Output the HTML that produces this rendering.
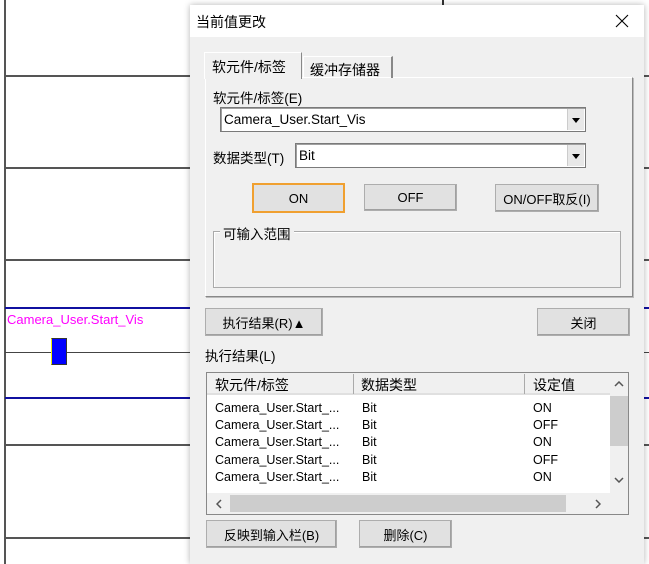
<!DOCTYPE html><html><head><meta charset="utf-8"><style>
*{box-sizing:border-box;margin:0;padding:0}
body{width:649px;height:564px;background:#fff;position:relative;overflow:hidden;font-family:"Liberation Sans","Noto Sans CJK SC",sans-serif;font-size:13px;color:#000}
.a{position:absolute}
.h{position:absolute;left:4px;width:645px;height:2px;background:#555}
.btn{position:absolute;background:#e1e1e1;border:1px solid #adadad;box-shadow:inset -1px -1px 0 #a0a0a0;display:flex;align-items:center;justify-content:center;font-size:13px}
.combo{position:absolute;background:#fff;border:1px solid #7a7a7a;box-shadow:inset 1px 1px 0 #a0a0a0;padding-left:3px;line-height:24px;font-size:13.5px}
.dd{position:absolute;right:1px;top:1px;bottom:1px;width:17px;background:#e8e8e8;border-left:1px solid #ccc}
.dd:after{content:"";position:absolute;left:4px;top:9px;border-left:4px solid transparent;border-right:4px solid transparent;border-top:5px solid #000}
.row{position:absolute;left:8px;font-size:12.5px;height:17px;line-height:17px}
</style></head><body>
<div class="a" style="left:4px;top:0;width:2px;height:564px;background:#555"></div>
<div class="a" style="left:442px;top:0;width:2px;height:10px;background:#333"></div>
<div class="h" style="top:75px"></div>
<div class="h" style="top:167px"></div>
<div class="h" style="top:259px"></div>
<div class="a" style="left:5px;top:307px;width:644px;height:2px;background:#1010a0"></div>
<div class="a" style="left:5px;top:397px;width:644px;height:2px;background:#1010a0"></div>
<div class="a" style="left:5px;top:352px;width:644px;height:1px;background:#444"></div>
<div class="h" style="top:444px"></div>
<div class="h" style="top:537px"></div>
<div class="a" style="left:7px;top:312px;color:#f0f;font-size:13px">Camera_User.Start_Vis</div>
<div class="a" style="left:51px;top:338px;width:16px;height:27px;background:#00f;border:1px solid #333;border-left-color:#ee0"></div>

<div class="a" style="left:190px;top:5px;width:454px;height:559px;background:#f0f0f0;box-shadow:0 0 6px rgba(0,0,0,.3)">
<div class="a" style="left:0;top:0;width:454px;height:32px;background:#fff"></div>
<div class="a" style="left:6px;top:7px;font-size:14px">当前值更改</div>
<svg class="a" style="left:425px;top:9px" width="14" height="14"><path d="M1 1L13 13M13 1L1 13" stroke="#000" stroke-width="1.1"/></svg>
<div class="a" style="left:15px;top:72px;width:428px;height:220px;border:1px solid #fff;border-right-color:#888;border-bottom-color:#888;box-shadow:1px 1px 0 #bbb"></div>
<div class="a" style="left:14px;top:47px;width:98px;height:27px;background:#f0f0f0;border:1px solid #fff;border-bottom:none;border-right-color:#888;padding:4px 0 0 7px;font-size:14px">软元件/标签</div>
<div class="a" style="left:113px;top:51px;width:90px;height:22px;border:1px solid #fff;border-bottom:none;border-right:2px solid #888;padding:3px 0 0 6px;font-size:14px">缓冲存储器</div>
<div class="a" style="left:23px;top:82px;font-size:13.5px">软元件/标签(E)</div>
<div class="combo" style="left:30px;top:102px;width:366px;height:25px">Camera_User.Start_Vis<div class="dd"></div></div>
<div class="a" style="left:23px;top:142px;font-size:13.5px">数据类型(T)</div>
<div class="combo" style="left:105px;top:138px;width:291px;height:25px">Bit<div class="dd"></div></div>
<div class="btn" style="left:62px;top:178px;width:93px;height:30px;border:2px solid #f0a030;box-shadow:none">ON</div>
<div class="btn" style="left:174px;top:179px;width:93px;height:27px">OFF</div>
<div class="btn" style="left:305px;top:179px;width:104px;height:28px">ON/OFF取反(I)</div>
<div class="a" style="left:23px;top:226px;width:408px;height:57px;border:1px solid #aaa;box-shadow:1px 1px 0 #fff inset"></div>
<div class="a" style="left:30px;top:218px;background:#f0f0f0;padding:0 3px;font-size:13.5px">可输入范围</div>
<div class="btn" style="left:15px;top:303px;width:118px;height:28px">执行结果(R)▲</div>
<div class="btn" style="left:347px;top:303px;width:93px;height:28px">关闭</div>
<div class="a" style="left:15px;top:340px;font-size:13.5px">执行结果(L)</div>
<div class="a" style="left:16px;top:367px;width:423px;height:143px;border:1px solid #888;background:#fff;overflow:hidden">
 <div class="a" style="left:0;top:0;width:403px;height:22px;background:#f0f0f0;border-bottom:2px solid #e0e0e0"></div>
 <div class="a" style="left:146px;top:1px;width:1px;height:20px;background:#aaa"></div>
 <div class="a" style="left:317px;top:1px;width:1px;height:20px;background:#aaa"></div>
 <div class="a" style="left:8px;top:2px;font-size:14px">软元件/标签</div>
 <div class="a" style="left:154px;top:2px;font-size:14px">数据类型</div>
 <div class="a" style="left:326px;top:2px;font-size:14px">设定值</div>
 <div class="row" style="top:27px">Camera_User.Start_...</div><div class="row" style="top:27px;left:155px">Bit</div><div class="row" style="top:27px;left:326px">ON</div>
 <div class="row" style="top:44px">Camera_User.Start_...</div><div class="row" style="top:44px;left:155px">Bit</div><div class="row" style="top:44px;left:326px">OFF</div>
 <div class="row" style="top:61px">Camera_User.Start_...</div><div class="row" style="top:61px;left:155px">Bit</div><div class="row" style="top:61px;left:326px">ON</div>
 <div class="row" style="top:79px">Camera_User.Start_...</div><div class="row" style="top:79px;left:155px">Bit</div><div class="row" style="top:79px;left:326px">OFF</div>
 <div class="row" style="top:96px">Camera_User.Start_...</div><div class="row" style="top:96px;left:155px">Bit</div><div class="row" style="top:96px;left:326px">ON</div>
 <div class="a" style="left:403px;top:0;width:18px;height:120px;background:#f0f0f0"></div>
 <div class="a" style="left:403px;top:23px;width:18px;height:50px;background:#cdcdcd"></div>
 <svg class="a" style="left:407px;top:8px" width="10" height="6"><path d="M1 5L5 1L9 5" stroke="#555" fill="none" stroke-width="1.5"/></svg>
 <svg class="a" style="left:407px;top:104px" width="10" height="6"><path d="M1 1L5 5L9 1" stroke="#555" fill="none" stroke-width="1.5"/></svg>
 <div class="a" style="left:0;top:120px;width:421px;height:21px;background:#f0f0f0"></div>
 <div class="a" style="left:23px;top:122px;width:336px;height:17px;background:#cdcdcd"></div>
 <svg class="a" style="left:9px;top:126px" width="6" height="10"><path d="M5 1L1 5L5 9" stroke="#555" fill="none" stroke-width="1.5"/></svg>
 <svg class="a" style="left:388px;top:126px" width="6" height="10"><path d="M1 1L5 5L1 9" stroke="#555" fill="none" stroke-width="1.5"/></svg>
</div>
<div class="btn" style="left:16px;top:515px;width:131px;height:28px">反映到输入栏(B)</div>
<div class="btn" style="left:169px;top:515px;width:93px;height:28px">删除(C)</div>
</div>
</body></html>
